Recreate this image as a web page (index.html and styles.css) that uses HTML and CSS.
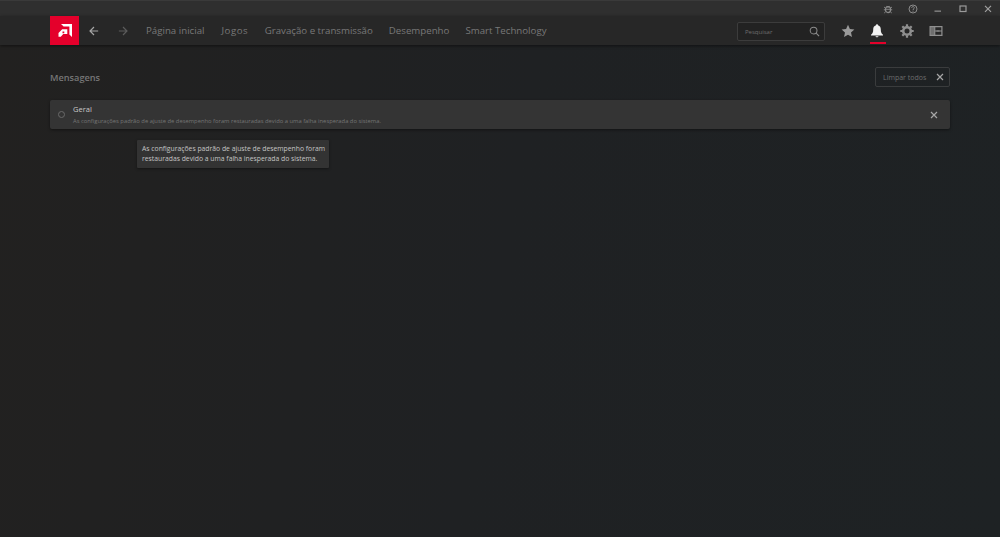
FILE: index.html
```html
<!DOCTYPE html>
<html lang="pt-BR">
<head>
<meta charset="utf-8">
<title>Mensagens</title>
<link rel="stylesheet" href="styles.css">
</head>
<body>
<div class="titlebar">
  <svg class="tb-icon" viewBox="0 0 10 10"><ellipse cx="5" cy="5.6" rx="2.6" ry="3" fill="none" stroke="#8a8a8a" stroke-width="1.2"/><path d="M3.5 2.4 5 3.2 6.5 2.4M1 3l1.6 1.2M9 3 7.4 4.200M.8 5.800H2.400M9.200 5.800H7.600M1.200 9 2.800 7.600M8.800 9 7.200 7.600M2.600 5.300H7.400" stroke="#8a8a8a" stroke-width=".9" fill="none"/></svg>
  <svg class="tb-icon" viewBox="0 0 10 10"><circle cx="5" cy="5" r="4" fill="none" stroke="#8a8a8a" stroke-width="1"/><path d="M3.700 3.900C3.800 2 6.400 2.200 6.300 3.800 6.300 4.800 5 4.800 5 6" fill="none" stroke="#8a8a8a" stroke-width="1"/><rect x="4.500" y="6.700" width="1" height="1" fill="#8a8a8a"/></svg>
  <svg class="tb-icon" viewBox="0 0 10 10"><rect x="1.500" y="6.500" width="6.500" height="1.300" fill="#8a8a8a"/></svg>
  <svg class="tb-icon" viewBox="0 0 10 10"><rect x="2" y="2" width="6" height="5.500" fill="none" stroke="#9a9a9a" stroke-width="1.200"/></svg>
  <svg class="tb-icon" viewBox="0 0 10 10"><path d="M2 1.800 8 7.800M8 1.800 2 7.800" stroke="#a0a0a0" stroke-width="1.200"/></svg>
</div>
<header class="nav">
  <div class="logo">
    <svg viewBox="0 0 14 14" width="14" height="14"><path d="M3 0H14V13L11.400 10.400V2.600H5.600Z" fill="#fff"/><path d="M.5 9 4.200 5.300H9.300V10H5.200L2.800 12.700H.5ZM4.500 7.600V9.200H6.300V7.600Z" fill="#fff" fill-rule="evenodd"/></svg>
  </div>
  <svg class="arrow arrow-back" viewBox="0 0 12 12"><path d="M11 6H1.500M6 1.200 1.200 6 6 10.800" fill="none" stroke="#a6a6a6" stroke-width="1.400"/></svg>
  <svg class="arrow arrow-fwd" viewBox="0 0 12 12"><path d="M1 6H10.500M6 1.200 10.800 6 6 10.800" fill="none" stroke="#5c5c5c" stroke-width="1.400"/></svg>
  <nav class="links">
    <a>Página inicial</a>
    <a class="wide">Jogos</a>
    <a>Gravação e transmissão</a>
    <a>Desempenho</a>
    <a>Smart Technology</a>
  </nav>
  <div class="search">
    <span>Pesquisar</span>
    <svg viewBox="0 0 12 12" width="11" height="11"><circle cx="5" cy="5" r="3.700" fill="none" stroke="#8c8c8c" stroke-width="1.100"/><path d="M7.800 7.800 11 11" stroke="#8c8c8c" stroke-width="1.200"/></svg>
  </div>
  <div class="tools">
    <button class="tool"><svg viewBox="0 0 14 14" width="14" height="14"><path d="M7 .8 8.900 5 13.400 5.500 10 8.500 11 13 7 10.700 3 13 4 8.500.6 5.500 5.100 5Z" fill="#9a9a9a"/></svg></button>
    <button class="tool active"><svg viewBox="0 0 14 14" width="14" height="14"><path d="M7 .3C7.700.3 8 .8 8 1.300 10 1.900 10.800 3.500 10.800 5.500 10.800 8 11.300 9.500 13 10.700V11.400H1V10.700C2.700 9.500 3.200 8 3.200 5.500 3.200 3.500 4 1.900 6 1.300 6 .8 6.300.3 7 .3ZM5.500 12.200H8.500C8.300 13.700 5.700 13.700 5.500 12.200Z" fill="#f2f2f2"/></svg></button>
    <button class="tool"><svg viewBox="0 0 14 14" width="14" height="14"><circle cx="7" cy="7" r="3.800" fill="none" stroke="#8f8f8f" stroke-width="2.600"/><path d="M7 .3V2.500M7 11.500V13.700M.3 7H2.500M11.500 7H13.700M2.300 2.300 3.800 3.800M10.200 10.200 11.700 11.700M11.700 2.300 10.200 3.800M3.800 10.200 2.300 11.700" stroke="#8f8f8f" stroke-width="2.200"/></svg></button>
    <button class="tool"><svg viewBox="0 0 14 14" width="14" height="14"><path d="M.5 2H13.500V12H.5ZM6.300 3.200V6.500H12.300V3.200ZM6.300 7.500V10.800H12.300V7.500Z" fill="#8f8f8f" fill-rule="evenodd"/><path d="M1.500 3.200H5.300V10.800H1.500Z" fill="#6e6e6e"/><path d="M7.500 7H10.500" stroke="#8f8f8f"/></svg></button>
  </div>
</header>
<main class="content">
  <div class="head">
    <h1>Mensagens</h1>
    <button class="clear">Limpar todos
      <svg viewBox="0 0 8 8" width="8" height="8"><path d="M1 1 7 7M7 1 1 7" stroke="#a6a6a6" stroke-width="1.200"/></svg>
    </button>
  </div>
  <section class="card">
    <span class="dot"></span>
    <div class="msg">
      <h2>Geral</h2>
      <p>As configurações padrão de ajuste de desempenho foram restauradas devido a uma falha inesperada do sistema.</p>
    </div>
    <svg class="close" viewBox="0 0 8 8" width="8" height="8"><path d="M1 1 7 7M7 1 1 7" stroke="#a6a6a6" stroke-width="1.200"/></svg>
  </section>
  <div class="tooltip">As configurações padrão de ajuste de desempenho foram restauradas devido a uma falha inesperada do sistema.</div>
</main>
</body>
</html>
```
FILE: styles.css
```css
* { box-sizing: border-box; }
html, body { height: 100%; }
body {
  margin: 0;
  height: 537px;
  overflow: hidden;
  display: flex;
  flex-direction: column;
  font-family: "Open Sans", "Noto Sans", sans-serif;
  background: linear-gradient(100deg, #222120 0%, #1f2123 50%, #1e2224 100%);
  color: #8a8a8a;
}
.titlebar {
  height: 16px;
  flex: none;
  background: #2f2f2f;
  border-top: 1px solid #3a3a3a;
  display: flex;
  justify-content: flex-end;
  align-items: center;
  padding-right: 7px;
  gap: 15px;
}
.tb-icon { width: 10px; height: 10px; }
.nav {
  height: 29px;
  flex: none;
  background: #272727;
  box-shadow: 0 1px 3px rgba(0, 0, 0, .5);
  display: flex;
  align-items: center;
  padding-left: 50px;
  position: relative;
}
.logo {
  width: 29px;
  height: 29px;
  background: #e4002b;
  display: flex;
  align-items: center;
  justify-content: center;
}
.arrow { width: 10px; height: 10px; flex: none; }
.arrow-back { margin-left: 10px; }
.arrow-fwd { margin-left: 19px; }
.links {
  display: flex;
  gap: 16px;
  margin-left: 18px;
  font-size: 9.700px;
  color: #787878;
  white-space: nowrap;
}
.wide { letter-spacing: .5px; margin: 0 .5px 0 1px; }
.search {
  margin-left: auto;
  width: 88px;
  height: 19px;
  margin-top: 1px;
  border: 1px solid #3c3c3c;
  border-radius: 2px;
  background: #222;
  display: flex;
  align-items: center;
  justify-content: space-between;
  padding: 1px 4px 0 7px;
  font-size: 6px;
  color: #6e6e6e;
}
.tools {
  display: flex;
  margin-left: 8px;
  margin-right: 49px;
}
.tool {
  width: 29.500px;
  height: 29px;
  padding: 0;
  border: 0;
  background: none;
  display: flex;
  align-items: center;
  justify-content: center;
}
.tool.active { position: relative; }
.tool.active::after {
  content: "";
  position: absolute;
  left: 7px;
  right: 6px;
  bottom: 1px;
  height: 2px;
  background: #e4002b;
}
.content {
  flex: 1;
  padding: 22px 50px 0;
  position: relative;
}
.head {
  display: flex;
  justify-content: space-between;
  align-items: center;
  height: 20px;
  margin-bottom: 13px;
}
h1 {
  margin: 0;
  font-size: 9.200px;
  font-weight: 600;
  color: #767676;
}
.clear {
  width: 75px;
  height: 20px;
  padding: 0 5px 0 7px;
  border: 1px solid #3a3c3d;
  border-radius: 2px;
  background: none;
  display: flex;
  align-items: center;
  justify-content: space-between;
  font: 7px "Open Sans", "Noto Sans", sans-serif;
  color: #6c6c6c;
}
.card {
  height: 29px;
  background: #343434;
  border-radius: 2px;
  box-shadow: 0 1px 3px rgba(0, 0, 0, .45);
  display: flex;
  align-items: center;
  padding: 0 12px 0 8px;
}
.dot {
  width: 7px;
  height: 7px;
  border: 1px solid #6a6a6a;
  border-radius: 50%;
  flex: none;
}
.msg { margin-left: 8px; flex: 1; }
h2 {
  margin: 0;
  font-size: 7.500px;
  font-weight: 400;
  line-height: 11px;
  color: #c8c8c8;
}
p {
  margin: 2px 0 0;
  font-size: 5.820px;
  line-height: 9px;
  color: #747474;
}
.tooltip {
  position: absolute;
  left: 137px;
  top: 95px;
  width: 192px;
  height: 28px;
  padding: 4px 2px 0 5px;
  background: #333;
  border-radius: 1px;
  box-shadow: 0 1px 3px rgba(0, 0, 0, .4);
  font-size: 6.800px;
  line-height: 10px;
  color: #c4c4c4;
}
```
